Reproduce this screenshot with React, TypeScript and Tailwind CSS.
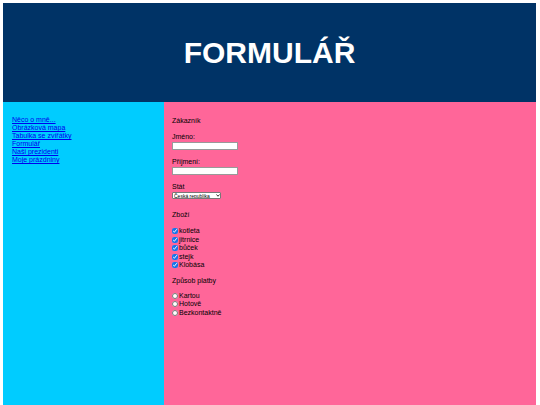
import React from 'react';

const links = ['Něco o mně...', 'Obrázková mapa', 'Tabulka se zvířátky', 'Formulář', 'Naši prezidenti', 'Moje prázdniny'];
const zbozi = ['kotleta', 'jitrnice', 'bůček', 'stejk', 'Klobása'];
const platby = ['Kartou', 'Hotově', 'Bezkontaktně'];

const App = () => {
  return (
    <div className="h-[405px] overflow-hidden bg-white pt-[3px] pl-[3px] pr-[4px] text-[7px] leading-[8px] text-black" style={{ fontFamily: '"Liberation Sans", Arial, sans-serif' }}>
      {/* Header */}
      <div className="h-[99px] bg-[#003366] flex items-center justify-center">
        <h1 className="text-[30px] font-bold text-white leading-none">FORMULÁŘ</h1>
      </div>

      <div className="flex h-[400px]">
        {/* Menu */}
        <div className="w-[161px] bg-[#00ccff] pl-[9px] pt-[14px]">
          {links.map((l) => (
            <div key={l}>
              <a href="#" className="text-[#0000ee] underline">{l}</a>
            </div>
          ))}
        </div>

        {/* Form */}
        <div className="flex-1 bg-[#ff6699] pl-[8px] pt-[15px]">
          <div>Zákazník</div>

          <div className="mt-[8px]">Jméno:</div>
          <input type="text" className="block w-[66px] h-[8px] bg-white border border-[#999] mt-[1px]" />

          <div className="mt-[8px]">Příjmení:</div>
          <input type="text" className="block w-[66px] h-[8px] bg-white border border-[#999] mt-[1px]" />

          <div className="mt-[8px]">Stát</div>
          <div className="relative mt-[1px] w-[49px]">
            <select className="block w-full appearance-none text-[5px] leading-[6px] h-[7px] pl-[1px] pr-[6px] py-0 bg-white border border-[#777] rounded-[1px]">
              <option>Česká republika</option>
            </select>
            <svg className="absolute right-[1px] top-[2px] w-[4px] h-[3px] pointer-events-none" viewBox="0 0 8 6">
              <path d="M1 1 L4 4.5 L7 1" fill="none" stroke="#000" strokeWidth="1.6" />
            </svg>
          </div>

          <div className="mt-[12px]">Zboží</div>
          <div className="mt-[8px]">
            {zbozi.map((z) => (
              <label key={z} className="flex items-center h-[8.5px]">
                <input type="checkbox" defaultChecked className="w-[6px] h-[6px] m-0 mr-[1px] accent-[#1a73e8]" />
                {z}
              </label>
            ))}
          </div>

          <div className="mt-[7px]">Způsob platby</div>
          <div className="mt-[7px]">
            {platby.map((p) => (
              <label key={p} className="flex items-center h-[8.5px]">
                <input type="radio" name="platba" className="w-[6px] h-[6px] m-0 mr-[1px]" />
                {p}
              </label>
            ))}
          </div>
        </div>
      </div>
    </div>
  );
};

export default App;
